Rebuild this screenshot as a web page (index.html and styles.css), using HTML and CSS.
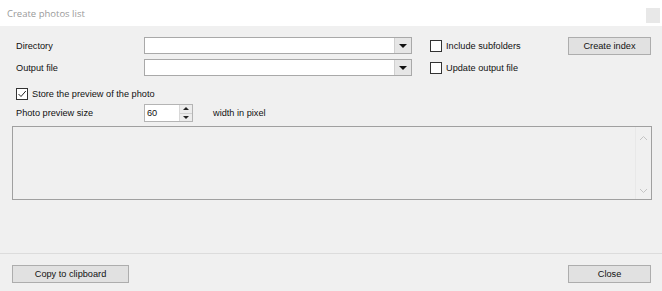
FILE: index.html
```html
<!DOCTYPE html>
<html lang="en">
<head>
    <meta charset="UTF-8">
    <title>Create photos list</title>
    <link rel="stylesheet" href="styles.css">
</head>
<body>
    <div class="titlebar">
        <span class="title">Create photos list</span>
        <span class="close-box"></span>
    </div>

    <div class="content">
        <div class="row row-first">
            <label class="label">Directory</label>
            <div class="combo"><span class="combo-input"></span><span class="combo-btn"><span class="arrow"></span></span></div>
            <div class="check-col"><span class="checkbox"></span><span>Include subfolders</span></div>
            <button class="btn btn-index">Create index</button>
        </div>
        <div class="row row-second">
            <label class="label">Output file</label>
            <div class="combo"><span class="combo-input"></span><span class="combo-btn"><span class="arrow"></span></span></div>
            <div class="check-col"><span class="checkbox"></span><span>Update output file</span></div>
        </div>
        <div class="row row-store">
            <span class="checkbox checked">
                <svg width="10" height="10" viewBox="0 0 10 10"><path d="M1.5 5 L4 7.5 L8.8 2" fill="none" stroke="#222" stroke-width="1"/></svg>
            </span>
            <span>Store the preview of the photo</span>
        </div>
        <div class="row row-size">
            <label class="label">Photo preview size</label>
            <div class="spin">
                <span class="spin-value">60</span>
                <span class="spin-btns">
                    <span class="spin-up"></span>
                    <span class="spin-down"></span>
                </span>
            </div>
            <span class="unit">width in pixel</span>
        </div>

        <div class="output">
            <div class="output-text"></div>
            <div class="scrollbar">
                <svg width="9" height="6" viewBox="0 0 9 6"><path d="M1 5 L4.5 1.5 L8 5" fill="none" stroke="#c4c4c4" stroke-width="1"/></svg>
                <svg width="9" height="6" viewBox="0 0 9 6"><path d="M1 1 L4.5 4.5 L8 1" fill="none" stroke="#c4c4c4" stroke-width="1"/></svg>
            </div>
        </div>
    </div>

    <div class="footer">
        <button class="btn btn-copy">Copy to clipboard</button>
        <button class="btn btn-close">Close</button>
    </div>
</body>
</html>
```

FILE: styles.css
```css
body {
    margin: 0;
    width: 662px;
    height: 291px;
    overflow: hidden;
    background: #f0f0f0;
    font-family: "Liberation Sans", Arial, sans-serif;
    font-size: 9.2px;
    color: #111;
}

/* barre de titre */
.titlebar {
    height: 26px;
    background: #fff;
    display: flex;
    align-items: center;
    justify-content: space-between;
    padding: 0 2px 0 7px;
}
.title {
    font-family: "Open Sans", "Noto Sans", sans-serif;
    font-size: 9.5px;
    color: #9a9a9a;
    margin-top: 1px;
}
.close-box {
    width: 14px;
    height: 15px;
    background: #e8e8e8;
    margin-top: 4px;
}

.content { padding: 0 10px 0 12px; }

.row {
    display: flex;
    align-items: center;
    padding-left: 4px;
}
.row-first { margin-top: 11px; height: 18px; }
.row-second { margin-top: 4px; height: 17px; }
.row-store { margin-top: 12px; height: 12px; gap: 4px; }
.row-size { margin-top: 4px; height: 18px; }

.label { width: 128px; }

.combo {
    width: 268px;
    height: 17px;
    display: flex;
    box-sizing: border-box;
    border: 1px solid #a9a9a9;
    background: #fff;
}
.row-first .combo { align-self: flex-start; }
.combo-input { flex: 1; }
.combo-btn {
    width: 16px;
    background: #e6e6e6;
    border-left: 1px solid #d0d0d0;
    display: flex;
    align-items: center;
    justify-content: center;
}
.arrow {
    width: 0;
    height: 0;
    border-left: 4px solid transparent;
    border-right: 4px solid transparent;
    border-top: 4px solid #111;
    margin-top: 1px;
}

.check-col {
    width: 138px;
    margin-left: 18px;
    display: flex;
    align-items: center;
    gap: 4px;
}
.checkbox {
    width: 12px;
    height: 12px;
    box-sizing: border-box;
    border: 1px solid #333;
    background: #fff;
    display: flex;
    align-items: center;
    justify-content: center;
}

.btn {
    height: 18px;
    box-sizing: border-box;
    background: #e1e1e1;
    border: 1px solid #adadad;
    font-family: inherit;
    font-size: 9.2px;
    color: #111;
    padding: 0;
}
.btn-index, .btn-close { width: 83px; }
.btn-copy { width: 117px; }

.spin {
    width: 49px;
    height: 18px;
    box-sizing: border-box;
    border: 1px solid #b4b4b4;
    background: #fff;
    display: flex;
}
.spin-value { flex: 1; padding-left: 2px; line-height: 16px; }
.spin-btns {
    width: 12px;
    display: flex;
    flex-direction: column;
    border-left: 1px solid #d8d8d8;
    background: #ececec;
}
.spin-up, .spin-down {
    flex: 1;
    display: flex;
    align-items: center;
    justify-content: center;
}
.spin-up::after, .spin-down::after {
    content: "";
    border-left: 3px solid transparent;
    border-right: 3px solid transparent;
}
.spin-up::after { border-bottom: 3px solid #222; }
.spin-down::after { border-top: 3px solid #222; }
.spin-up { border-bottom: 1px solid #d0d0d0; }
.unit { margin-left: 20px; }

/* zone de texte */
.output {
    margin-top: 4px;
    width: 640px;
    height: 74px;
    box-sizing: border-box;
    border: 1px solid #a0a0a0;
    display: flex;
}
.output-text { flex: 1; }
.scrollbar {
    width: 15px;
    border-left: 1px solid #e8e8e8;
    display: flex;
    flex-direction: column;
    justify-content: space-between;
    align-items: center;
    padding: 8px 0 5px;
}

.footer {
    margin-top: 53px;
    border-top: 1px solid #dcdcdc;
    display: flex;
    justify-content: space-between;
    padding: 11px 11px 0 12px;
}
```
